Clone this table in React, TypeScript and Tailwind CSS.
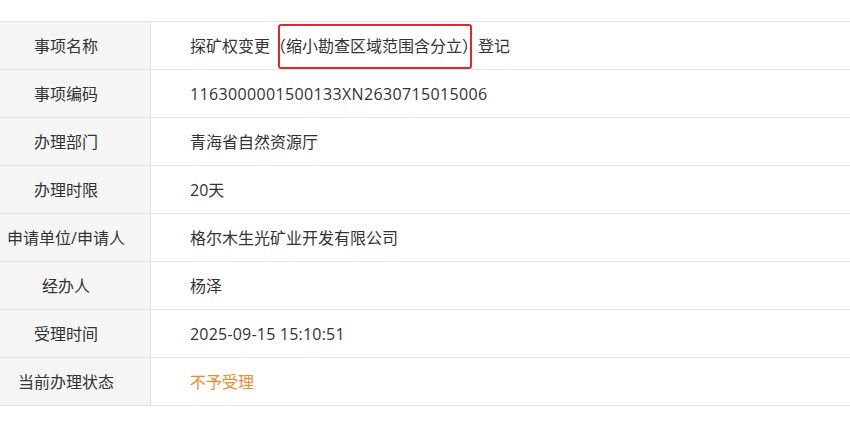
const rows: { label: string; value: React.ReactNode }[] = [
    {
        label: '事项名称',
        value: (
            <>
                探矿权变更
                <span className="relative">
                    （缩小勘查区域范围含分立）
                    <span className="absolute left-[8px] right-[6px] top-[-10px] bottom-[-11px] border-2 border-[#e02a2a] rounded-[3px]" />
                </span>
                登记
            </>
        ),
    },
    { label: '事项编码', value: <span className="tracking-[0.35px]">1163000001500133XN2630715015006</span> },
    { label: '办理部门', value: '青海省自然资源厅' },
    { label: '办理时限', value: '20天' },
    { label: '申请单位/申请人', value: '格尔木生光矿业开发有限公司' },
    { label: '经办人', value: '杨泽' },
    { label: '受理时间', value: <span className="tracking-[0.2px]">2025-09-15 15:10:51</span> },
    { label: '当前办理状态', value: <span className="text-[#ee8a2c]">不予受理</span> },
]

export default function App() {
    return (
        <div className="w-[850px] h-[422px] bg-white pt-[21px] font-['Open_Sans','Noto_Sans_CJK_SC',sans-serif] text-[16px] text-[#333]">
            <div className="border-t border-[#e4e4e4]">
                {rows.map((r) => (
                    <div key={r.label} className="grid grid-cols-[151px_1fr] h-[48px] border-b border-[#e4e4e4]">
                        <div className="bg-[#f5f5f5] border-r border-[#e4e4e4] flex items-center justify-center pr-[18px] whitespace-nowrap">
                            {r.label}
                        </div>
                        <div className="flex items-center pl-[39px] whitespace-nowrap">
                            {r.value}
                        </div>
                    </div>
                ))}
            </div>
        </div>
    )
}
